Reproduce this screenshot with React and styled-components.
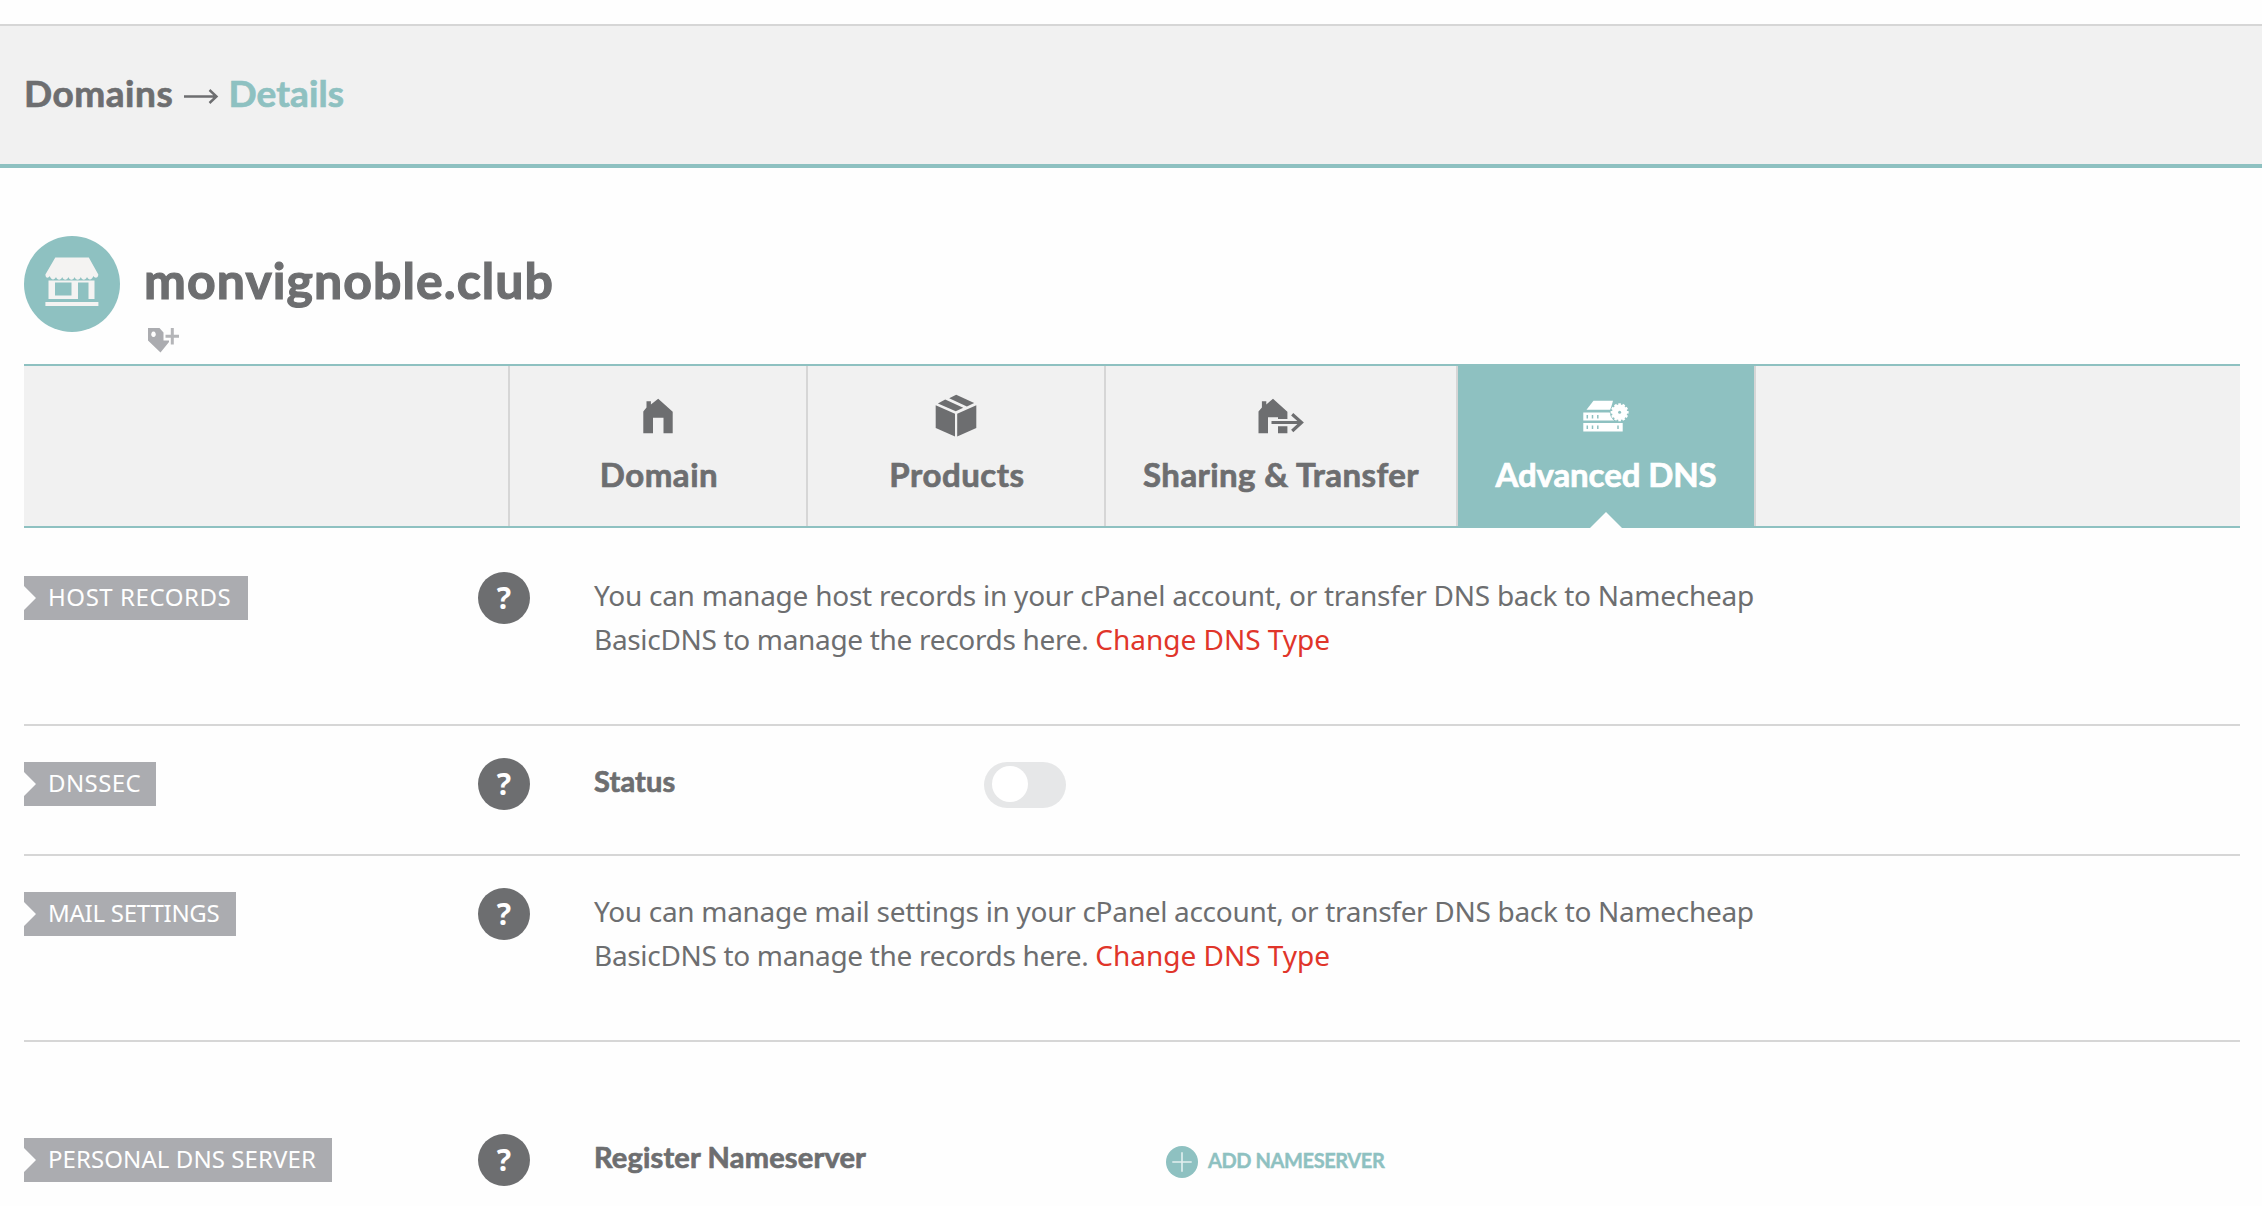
import React from "react";
import styled, { createGlobalStyle, css } from "styled-components";

const teal = "#8ec1c1";
const ink = "#6d6e70";
const line = "#d6d6d6";
const panel = "#f1f1f1";
const heading = `Lato, "Open Sans", sans-serif`;
const body = `"Noto Sans", "Open Sans", sans-serif`;

const heavier = css`
  -webkit-text-stroke: 0.7px currentColor;
`;

const GlobalStyle = createGlobalStyle`
  * { box-sizing: border-box; }
  body {
    margin: 0;
    background: #fefefe;
    color: ${ink};
    font-family: ${body};
    overflow: hidden;
  }
`;

const Page = styled.div`
  height: 1206px;
  padding-top: 24px;
  overflow: hidden;
`;

const Breadcrumb = styled.header`
  display: grid;
  grid-template-columns: 160px 44.5px auto;
  justify-content: start;
  height: 144px;
  padding: 45px 24px 0;
  background: ${panel};
  border-top: 2px solid ${line};
  border-bottom: 4px solid ${teal};
`;

const Crumb = styled.span`
  font: 700 37px/44px ${heading};
  letter-spacing: ${(p) => p.$spacing || 0}px;
  color: ${(p) => (p.$current ? teal : ink)};
  ${heavier}
`;

const CrumbArrow = styled.svg`
  display: block;
  width: 35px;
  height: 16px;
  margin-top: 17px;
`;

const Main = styled.main`
  padding: 0 22px 0 24px;
`;

const DomainHeader = styled.section`
  display: flex;
  gap: 24px;
  height: 196px;
  padding-top: 68px;
`;

const DomainBadge = styled.div`
  display: flex;
  justify-content: center;
  width: 96px;
  height: 96px;
  padding-top: 21px;
  border-radius: 50%;
  background: ${teal};
`;

const DomainTitle = styled.div`
  display: flex;
  flex-direction: column;
  padding-top: 14px;
`;

const DomainName = styled.h1`
  margin: 0;
  font: 700 50px/60px ${heading};
  letter-spacing: 1.05px;
  -webkit-text-stroke: 1.2px currentColor;
`;

const TagButton = styled.button`
  width: 34px;
  height: 26px;
  margin: 17px 0 0 3px;
  padding: 0;
  border: 0;
  background: none;
  svg { display: block; }
`;

const TabBar = styled.nav`
  display: flex;
  height: 164px;
  padding-left: 484px;
  background: ${panel};
  border-top: 2px solid ${teal};
  border-bottom: 2px solid ${teal};
`;

const Tab = styled.a`
  position: relative;
  display: flex;
  flex-direction: column;
  align-items: center;
  width: ${(p) => p.$width}px;
  border-left: 2px solid ${line};
  background: ${(p) => (p.$active ? teal : "transparent")};
  color: ${(p) => (p.$active ? "#fff" : ink)};
`;

const TabEnd = styled.span`
  border-left: 2px solid ${line};
`;

const TabIcon = styled.span`
  display: flex;
  justify-content: center;
  height: 88px;
  padding-top: ${(p) => p.$top}px;
`;

const TabLabel = styled.span`
  font: 700 33px/40px ${heading};
  letter-spacing: ${(p) => p.$spacing}px;
  padding-left: ${(p) => p.$nudge || 0}px;
  white-space: nowrap;
  ${heavier}
`;

const Pointer = styled.i`
  position: absolute;
  left: 132px;
  bottom: -2px;
  width: 32px;
  height: 16px;
  background: #fefefe;
  clip-path: polygon(50% 0, 100% 100%, 0 100%);
`;

const Row = styled.section`
  display: grid;
  grid-template-columns: 454px 52px auto;
  align-items: start;
  justify-content: start;
  height: ${(p) => p.$height}px;
  padding-top: ${(p) => p.$top}px;
  border-bottom: 2px solid ${line};
`;

const Tag = styled.span`
  justify-self: start;
  width: ${(p) => p.$width}px;
  height: 44px;
  margin-top: 4px;
  padding-left: 24px;
  background: #abacb0;
  clip-path: polygon(0 0, 100% 0, 100% 100%, 0 100%, 0 34px, 12px 22px, 0 10px);
  color: #fff;
  font: 400 24px/42px ${body};
  letter-spacing: ${(p) => p.$spacing}px;
  white-space: nowrap;
`;

const Help = styled.button`
  width: 52px;
  height: 52px;
  padding: 0;
  border: 0;
  border-radius: 50%;
  background: ${ink};
  color: #fff;
  font: 700 30px/50px ${body};
  text-align: center;
`;

const Content = styled.div`
  display: flex;
  align-items: flex-start;
  padding-left: 64px;
`;

const Message = styled.p`
  margin: 1px 0 0;
  font: 400 28px/44px ${body};
  letter-spacing: ${(p) => p.$spacing}px;
  white-space: nowrap;
`;

const SecondLine = styled.span`
  letter-spacing: -0.32px;
`;

const ChangeLink = styled.a`
  color: #e0352a;
  letter-spacing: -0.02px;
`;

const FieldName = styled.h2`
  width: ${(p) => p.$width}px;
  margin: 1px 0 0;
  font: 700 29px/44px ${heading};
  letter-spacing: 0.18px;
  ${heavier}
`;

const Toggle = styled.button`
  width: 82px;
  height: 46px;
  margin-top: 4px;
  padding: 4px 8px 6px;
  border: 0;
  border-radius: 23px;
  background: #e6e7e8;
`;

const Knob = styled.span`
  display: block;
  width: 36px;
  height: 36px;
  border-radius: 50%;
  background: #fff;
`;

const AddButton = styled.button`
  display: flex;
  align-items: flex-start;
  gap: 10px;
  margin-top: 12px;
  padding: 0;
  border: 0;
  background: none;
  color: ${teal};
  font: 700 20px/29px ${heading};
  letter-spacing: -0.4px;
  -webkit-text-stroke: 0.4px currentColor;
`;

const StoreIcon = () => (
  <svg width="54" height="50" viewBox="0 0 54 50" fill="#f4f3f2">
    <path d="M10.3 0.5h33.5l9.5 17c0 3.4-3.2 4.4-5 1.6-1.2 4.4-5 4.4-6.3 1-1.4 3.6-5 3.6-6.2 0-1.3 3.6-5 3.6-6.2 0-1.3 3.6-5 3.6-6.2 0-1.3 3.6-5 3.6-6.2 0-1.2 3.6-5 3.6-6.2 0-1.3 3.4-5 3.4-6.2-1C3 21.900.4 20.900.4 17.500Z" />
    <path fillRule="evenodd" d="M3.500 23.500h46v18.500h-46Zm6.500 2v13h16.500v-13Zm23 0v16.500h10.500v-16.500Z" />
    <path d="M.4 45h53v4h-53Z" />
  </svg>
);

const TagIcon = () => (
  <svg width="34" height="26" viewBox="0 0 34 26">
    <path fill="#abacb0" fillRule="evenodd" d="M1 1h11.500l4 4.500v8h5.500v1.500L13.500 25.500 1 13.500Zm5.500 3.500a2.300 2.800 0 1 0 .01 0Z" />
    <path stroke="#b4b5b8" strokeWidth="3" d="M25.300 1v16.500M18.500 9.200h13.500" />
  </svg>
);

const HouseIcon = () => (
  <svg width="30" height="36" viewBox="0 0 30 36">
    <path fill="currentColor" d="M.3 35.300V13.500l3.200-4V3.200h4.400v3.300L15.200.7 29.700 13.800v21.500h-9.200V19.700H10v15.600Z" />
  </svg>
);

const BoxIcon = () => (
  <svg width="42" height="43" viewBox="0 0 42 43" fill="currentColor">
    <path d="M.7 11.300 20 19.700V42.500L.7 34Z" />
    <path d="M22.200 19.700 41.300 11.300V34L22.200 42.500Z" />
    <path d="M2.900 9.400 10.200 5.500 28.200 13.700 20.800 17.200Z" />
    <path d="M14.200 4.200 21.200.8 39.200 8.900 31.900 12.400Z" />
  </svg>
);

const TransferIcon = () => (
  <svg width="46" height="36" viewBox="0 0 46 36">
    <path fill="currentColor" d="M.5 35.300V13.500l3.400-4V3.200h4.400v3.300L15 .7 29.400 13.800V21H20v-1.700H10v16ZM20 28.300h9.400v7H20Z" />
    <path fill="none" stroke={panel} strokeWidth="7" d="M12 24.500H40" />
    <path fill="none" stroke="currentColor" strokeWidth="3.200" d="M13.500 24.500H43.500M34.200 16.200 43.500 24.500 34.200 33" />
  </svg>
);

const TEETH = Array.from({ length: 12 }, (_, i) => i * 30);

const ServerIcon = () => (
  <svg width="46" height="33" viewBox="0 0 46 33">
    <path fill="currentColor" d="M10.500.8H30L27.500 9.800H3.500Z" />
    <path fill="currentColor" d="M.3 12.600H28L31 20.500H.3ZM.3 23H39.700v8.500H.3Z" />
    <circle cx="36.600" cy="12.300" r="9.800" fill={teal} />
    <g fill="currentColor">
      {TEETH.map((a) => (
        <path key={a} d="M35.300 3.300h2.600v4h-2.600Z" transform={`rotate(${a} 36.600 12.300)`} />
      ))}
      <circle cx="36.600" cy="12.300" r="7.700" />
    </g>
    <path stroke={teal} strokeWidth="1.500" d="M4.300 15v3.500M9.500 15v3.500M14.800 15v3.500M4.300 25.500V29M9.500 25.500V29M14.800 25.500V29M35 25.500V29" />
    <circle cx="36.600" cy="12.300" r="1.500" fill={teal} />
  </svg>
);

const PlusCircle = () => (
  <svg width="32" height="32" viewBox="0 0 32 32">
    <circle cx="16" cy="16" r="16" fill={teal} />
    <path stroke="#e3f0f0" strokeWidth="1.600" d="M16 6.300v19.400M6.300 16h19.400" />
  </svg>
);

const TABS = [
  { label: "Domain", width: 298, top: 32, spacing: 0.55, nudge: 2, Icon: HouseIcon },
  { label: "Products", width: 298, top: 28, spacing: 0.55, nudge: 2, Icon: BoxIcon },
  { label: "Sharing & Transfer", width: 352, top: 32, spacing: 0.4, Icon: TransferIcon },
  { label: "Advanced DNS", width: 298, top: 34, spacing: -0.1, Icon: ServerIcon, active: true },
];

const SettingRow = ({ label, tagWidth, spacing, top, height, children }) => (
  <Row $top={top} $height={height}>
    <Tag $width={tagWidth} $spacing={spacing}>{label}</Tag>
    <Help>?</Help>
    <Content>{children}</Content>
  </Row>
);

const ManagedNotice = ({ subject, spacing }) => (
  <Message $spacing={spacing}>
    You can manage {subject} in your cPanel account, or transfer DNS back to Namecheap
    <br />
    <SecondLine>BasicDNS to manage the records here. </SecondLine>
    <ChangeLink>Change DNS Type</ChangeLink>
  </Message>
);

export default function App() {
  return (
    <Page>
      <GlobalStyle />
      <Breadcrumb>
        <Crumb $spacing={0.55}>Domains</Crumb>
        <CrumbArrow viewBox="0 0 35 16">
          <path fill="none" stroke={ink} strokeWidth="2.400" d="M0 8.500h32M25.500 2l7 6.500-7 6.500" />
        </CrumbArrow>
        <Crumb $current $spacing={0.1}>Details</Crumb>
      </Breadcrumb>
      <Main>
        <DomainHeader>
          <DomainBadge><StoreIcon /></DomainBadge>
          <DomainTitle>
            <DomainName>monvignoble.club</DomainName>
            <TagButton><TagIcon /></TagButton>
          </DomainTitle>
        </DomainHeader>
        <TabBar>
          {TABS.map(({ label, width, top, spacing, nudge, Icon, active }) => (
            <Tab key={label} $width={width} $active={active}>
              <TabIcon $top={top}><Icon /></TabIcon>
              <TabLabel $spacing={spacing} $nudge={nudge}>{label}</TabLabel>
              {active && <Pointer />}
            </Tab>
          ))}
          <TabEnd />
        </TabBar>
        <SettingRow label="HOST RECORDS" tagWidth={224} spacing={0.55} top={44} height={198}>
          <ManagedNotice subject="host records" spacing={-0.25} />
        </SettingRow>
        <SettingRow label="DNSSEC" tagWidth={132} spacing={0.4} top={32} height={130}>
          <FieldName $width={390}>Status</FieldName>
          <Toggle><Knob /></Toggle>
        </SettingRow>
        <SettingRow label="MAIL SETTINGS" tagWidth={212} spacing={-0.25} top={32} height={186}>
          <ManagedNotice subject="mail settings" spacing={-0.3} />
        </SettingRow>
        <SettingRow label="PERSONAL DNS SERVER" tagWidth={308} spacing={0.08} top={92} height={186}>
          <FieldName $width={572}>Register Nameserver</FieldName>
          <AddButton><PlusCircle />ADD NAMESERVER</AddButton>
        </SettingRow>
      </Main>
    </Page>
  );
}
